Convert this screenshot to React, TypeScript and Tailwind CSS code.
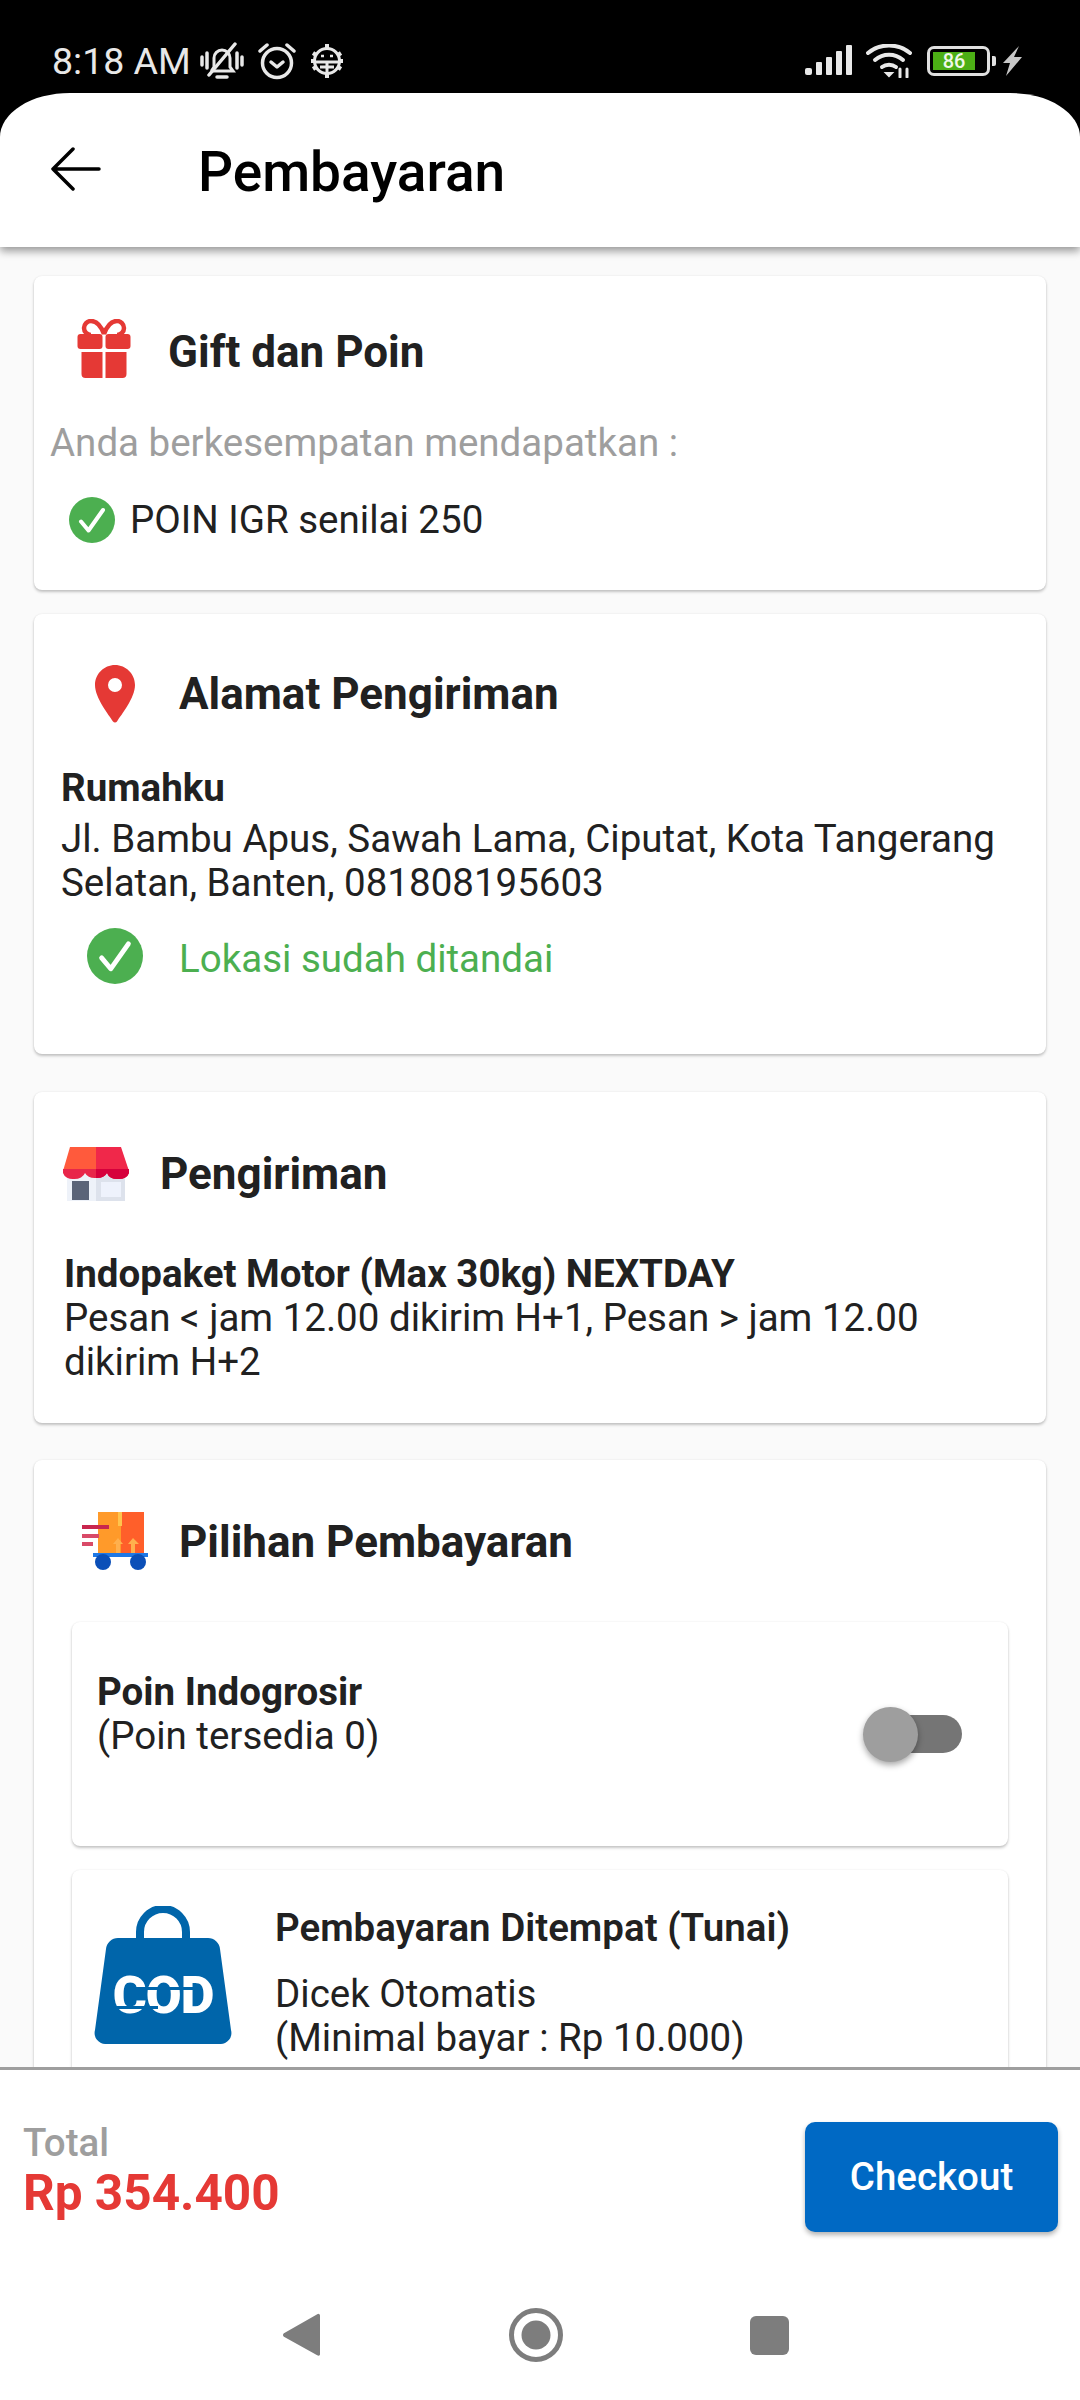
import React from "react";

const font = { fontFamily: "Roboto, sans-serif" };

function CheckCircle({ size }: { size: number }) {
  return (
    <svg width={size} height={size} viewBox="0 0 46 46" className="shrink-0">
      <circle cx="23" cy="23" r="23" fill="#4caf50" />
      <path d="M12 24.500l7.500 9L34 13" fill="none" stroke="#fff" strokeWidth="4" strokeLinecap="round" strokeLinejoin="round" />
    </svg>
  );
}

function StatusLeft() {
  return (
    <div className="flex items-center">
      <span className="text-[37.5px] leading-[44px] text-[#e8e8e8] mr-[9px]">8:18 AM</span>
      <svg width="44" height="38" viewBox="0 0 44 38" className="mr-[14px]" fill="none" stroke="#e8e8e8" strokeWidth="3.500" strokeLinecap="round">
        <path d="M2 15v8M7 11v15M37 11v15M42 15v8" />
        <path d="M12 28l2-3v-9a8 8 0 0 1 16 0v9l3 4H13z" strokeWidth="3" />
        <path d="M9 33L35 2" />
        <path d="M17 35h10" strokeWidth="3.500" />
      </svg>
      <svg width="38" height="38" viewBox="0 0 38 38" className="mr-[14px]" fill="none" stroke="#e8e8e8" strokeWidth="3.500" strokeLinecap="round" strokeLinejoin="round">
        <circle cx="19" cy="21" r="14.500" />
        <path d="M13 20l6 5 6-5" />
        <path d="M2 9l7-6M36 9l-7-6" />
      </svg>
      <svg width="34" height="36" viewBox="0 0 34 36" fill="none" stroke="#e8e8e8" strokeWidth="3">
        <circle cx="17" cy="18" r="12.500" />
        <path d="M17 1v5M17 30v5M3 10l3 2M31 10l-3 2M3 26l3-2M31 26l-3-2M1 18h4M29 18h4" strokeWidth="4" />
        <path d="M6 19h22M17 19v11M10 24h14" />
        <path d="M11 13h3M20 13h3" strokeWidth="2.500" />
      </svg>
    </div>
  );
}

function StatusRight() {
  return (
    <div className="flex items-center">
      <svg width="48" height="32" viewBox="0 0 48 32" className="mr-[13px]" fill="#e8e8e8">
        <rect x="0" y="23" width="7" height="7" rx="2" />
        <rect x="11" y="17" width="6" height="13" rx="1" />
        <rect x="21" y="12" width="6" height="18" rx="1" />
        <rect x="31" y="6" width="6" height="24" rx="1" />
        <rect x="41" y="0" width="6" height="30" rx="1" />
      </svg>
      <svg width="46" height="34" viewBox="0 0 46 34" className="mr-[15px]" fill="none" stroke="#e8e8e8" strokeWidth="4" strokeLinecap="round">
        <path d="M2 9c12-10 30-10 42 0" />
        <path d="M9 16c8-7 20-7 28 0" />
        <path d="M16 23c4-3 10-3 14 0" />
        <path d="M20 29l3 3 3-3z" fill="#e8e8e8" strokeWidth="2" />
        <path d="M34 25v8M41 25v8" strokeWidth="3" />
      </svg>
      <div className="w-[63px] h-[30px] rounded-[7px] border-[3px] border-[#e0e0e0] p-[3px] mr-[2px]">
        <div className="w-[42px] h-full bg-[#4caf15] flex items-center justify-center text-[20px] leading-none font-medium text-[#f0f8e8]">86</div>
      </div>
      <div className="w-[4px] h-[10px] bg-[#e0e0e0] rounded-r-[2px] mr-[7px]" />
      <svg width="19" height="30" viewBox="0 0 19 30" fill="#c8c8c8">
        <path d="M16 0L0 17h7L3 30 19 11h-8z" />
      </svg>
    </div>
  );
}

function GiftIcon() {
  return (
    <svg width="54" height="60" viewBox="0 0 54 60" className="shrink-0">
      <path d="M27 15c-3-8-7-13-13-13a7 7 0 0 0 0 14M27 15c3-8 7-13 13-13a7 7 0 0 1 0 14" fill="none" stroke="#e53935" strokeWidth="4.500" />
      <rect x="0.500" y="15" width="25" height="15" rx="3" fill="#e53935" />
      <rect x="28.500" y="15" width="25" height="15" rx="3" fill="#e53935" />
      <path d="M4.500 33h21v26h-17a4 4 0 0 1-4-4zM28.500 33h21v22a4 4 0 0 1-4 4h-17z" fill="#e53935" />
    </svg>
  );
}

function PinIcon() {
  return (
    <svg width="40" height="58" viewBox="0 0 40 58" className="shrink-0">
      <path fillRule="evenodd" d="M20 0C9 0 0 9 0 20c0 13 14 30 18 36.500a2.500 2.500 0 0 0 4 0C26 50 40 33 40 20 40 9 31 0 20 0zm0 13a7 7 0 1 1 0 14 7 7 0 0 1 0-14z" fill="#e53935" />
    </svg>
  );
}

function StoreIcon() {
  return (
    <svg width="66" height="56" viewBox="0 0 66 56" className="shrink-0">
      <rect x="4" y="20" width="58" height="35" fill="#eef2f9" />
      <rect x="33" y="20" width="29" height="35" fill="#dde2ec" />
      <rect x="9" y="35" width="17" height="19" fill="#5b6478" />
      <rect x="38" y="36" width="20" height="15" fill="#eef2fc" />
      <path d="M7 1h26v24H0z" fill="#ff5a3c" />
      <path d="M33 1h25l8 24H33z" fill="#f0284a" />
      <path d="M0 23h66v4a10 8 0 0 1-11 6 10 8 0 0 1-11-6 11 8 0 0 1-11 5 11 8 0 0 1-11-5 11 8 0 0 1-11 6 10 8 0 0 1-11-6z" fill="#e8264a" />
      <path d="M33 23h33v4a10 8 0 0 1-11 6 10 8 0 0 1-11-6 11 8 0 0 1-11 5z" fill="#d6003c" />
    </svg>
  );
}

function TruckIcon() {
  return (
    <svg width="66" height="60" viewBox="0 0 66 60" className="shrink-0">
      <rect x="16" y="0" width="23" height="43" fill="#ff9a2a" />
      <rect x="39" y="0" width="23" height="43" fill="#ff5f2a" />
      <rect x="36" y="0" width="4" height="14" fill="#ffc44d" />
      <path d="M36 26l5 6h-3v10h-4V32h-3zM51 26l6 6h-4v10h-4V32h-3z" fill="#ffb04d" />
      <rect x="0" y="13" width="27" height="4" fill="#c9264e" />
      <rect x="0" y="22" width="17" height="4" fill="#d94a68" />
      <rect x="0" y="30" width="11" height="4" fill="#d94a68" />
      <rect x="11" y="41" width="55" height="4" fill="#1e78e6" />
      <circle cx="21" cy="50" r="8" fill="#0b4fb8" />
      <circle cx="56" cy="50" r="8" fill="#0b4fb8" />
    </svg>
  );
}

function CodIcon() {
  return (
    <svg width="138" height="138" viewBox="0 0 138 138" className="shrink-0">
      <path d="M46 36V26a23 23 0 0 1 46 0v10" fill="none" stroke="#0065aa" strokeWidth="8" />
      <path d="M24 32h90a12 12 0 0 1 12 11l11 81a11 11 0 0 1-11 14H12a11 11 0 0 1-11-14l11-81a12 12 0 0 1 12-11z" fill="#0065aa" />
      <text x="69" y="107" textAnchor="middle" fontFamily="Roboto, sans-serif" fontWeight="900" fontSize="52" letterSpacing="-1" fill="#fff">COD</text>
      <rect x="34" y="81" width="72" height="3" fill="#0065aa" />
      <rect x="20" y="100" width="44" height="3" fill="#0065aa" />
    </svg>
  );
}

function Card({ className, children }: { className: string; children: React.ReactNode }) {
  return (
    <div className={"bg-white rounded-[8px] shadow-[0_2px_3px_rgba(0,0,0,0.22),0_0_2px_rgba(0,0,0,0.08)] " + className}>
      {children}
    </div>
  );
}

export default function App() {
  return (
    <div className="w-[1080px] h-[2400px] flex flex-col overflow-hidden bg-black text-[#212121]" style={font}>
      {/* status bar */}
      <div className="h-[93px] shrink-0 flex items-center justify-between pl-[52px] pr-[58px] pt-[28px]">
        <StatusLeft />
        <StatusRight />
      </div>

      {/* app bar */}
      <div className="relative z-10 h-[154px] shrink-0 bg-white rounded-t-[70px_44px] shadow-[0_4px_8px_rgba(0,0,0,0.4)] flex items-center pl-[51px]">
        <svg width="50" height="44" viewBox="0 0 50 44" className="shrink-0 mt-[-2px]" fill="none" stroke="#000" strokeWidth="3.500" strokeLinecap="round" strokeLinejoin="round">
          <path d="M48 22H2M22 2L2 22l20 20" />
        </svg>
        <span className="ml-[97px] text-[55px] leading-[64px] font-medium text-black mt-[4px]">Pembayaran</span>
      </div>

      {/* content */}
      <div className="flex-1 min-h-0 overflow-hidden bg-[#fafafa] pt-[29px] px-[34px] flex flex-col">
        <Card className="h-[314px] shrink-0 pt-[43px] flex flex-col">
          <div className="flex items-center pl-[43px] h-[60px]">
            <GiftIcon />
            <span className="ml-[37px] text-[44px] leading-[50px] font-bold mt-[6px]">Gift dan Poin</span>
          </div>
          <div className="pl-[16px] mt-[42px] text-[38.5px] leading-[44px] text-[#9e9e9e]">Anda berkesempatan mendapatkan :</div>
          <div className="flex items-center pl-[35px] mt-[32px]">
            <CheckCircle size={46} />
            <span className="ml-[15px] text-[38.5px] leading-[44px]">POIN IGR senilai 250</span>
          </div>
        </Card>

        <Card className="h-[440px] shrink-0 mt-[24px] pt-[50px]">
          <div className="flex items-center pl-[61px] h-[60px]">
            <PinIcon />
            <span className="ml-[44px] text-[44px] leading-[50px] font-bold">Alamat Pengiriman</span>
          </div>
          <div className="pl-[27px] pr-[30px] mt-[42px] text-[38.5px] leading-[44px]">
            <div className="font-bold">Rumahku</div>
            <div className="mt-[7px]">Jl. Bambu Apus, Sawah Lama, Ciputat, Kota Tangerang Selatan, Banten, 081808195603</div>
          </div>
          <div className="flex items-center pl-[53px] mt-[23px]">
            <CheckCircle size={56} />
            <span className="ml-[36px] text-[38.5px] leading-[44px] text-[#4caf50] mt-[6px]">Lokasi sudah ditandai</span>
          </div>
        </Card>

        <Card className="h-[331px] shrink-0 mt-[38px] pt-[54px]">
          <div className="flex items-center pl-[29px] h-[56px]">
            <StoreIcon />
            <span className="ml-[31px] text-[44px] leading-[50px] font-bold">Pengiriman</span>
          </div>
          <div className="pl-[30px] pr-[30px] mt-[50px] text-[38.5px] leading-[44px]">
            <div className="font-bold">Indopaket Motor (Max 30kg) NEXTDAY</div>
            <div>Pesan &lt; jam 12.00 dikirim H+1, Pesan &gt; jam 12.00 dikirim H+2</div>
          </div>
        </Card>

        <Card className="h-[700px] shrink-0 mt-[37px] pt-[52px] px-[38px]">
          <div className="flex items-center pl-[10px] h-[60px]">
            <TruckIcon />
            <span className="ml-[31px] text-[44px] leading-[50px] font-bold">Pilihan Pembayaran</span>
          </div>
          <Card className="h-[224px] mt-[50px] pt-[48px] pl-[25px] pr-[46px] flex justify-between items-start">
            <div className="text-[38.5px] leading-[44px]">
              <div className="font-bold">Poin Indogrosir</div>
              <div>(Poin tersedia 0)</div>
            </div>
            <div className="relative w-[82px] h-[38px] mt-[45px] rounded-full bg-[#757575]">
              <div className="absolute left-[-17px] top-[-8px] w-[55px] h-[55px] rounded-full bg-[#9e9e9e] shadow-[0_3px_6px_rgba(0,0,0,0.35)]" />
            </div>
          </Card>
          <Card className="h-[300px] mt-[24px] pt-[36px] pl-[22px] flex">
            <CodIcon />
            <div className="ml-[43px] text-[38.5px] leading-[44px]">
              <div className="font-semibold">Pembayaran Ditempat (Tunai)</div>
              <div className="mt-[22px]">Dicek Otomatis</div>
              <div>(Minimal bayar : Rp 10.000)</div>
            </div>
          </Card>
        </Card>
      </div>

      {/* footer */}
      <div className="relative z-10 h-[333px] shrink-0 bg-white border-t-[3px] border-[#9e9e9e]">
        <div className="flex items-center justify-between pl-[23px] pr-[22px] pt-[51px]">
          <div className="mb-[12px]">
            <div className="text-[38.5px] leading-[44px] font-medium text-[#9e9e9e]">Total</div>
            <div className="text-[49.5px] leading-[56px] font-bold text-[#e53935]">Rp 354.400</div>
          </div>
          <div className="w-[253px] h-[110px] rounded-[10px] bg-[#0069c4] shadow-[0_3px_5px_rgba(0,0,0,0.3)] flex items-center justify-center text-[38.5px] font-medium text-white">
            Checkout
          </div>
        </div>
        <div className="flex items-center justify-center mt-[67px] h-[70px] pr-[12px]">
          <svg width="37" height="46" viewBox="0 0 40 46" className="ml-[3px]">
            <path d="M38 0a2 2 0 0 1 2 2v42a2 2 0 0 1-3 1L1 25a2.500 2.500 0 0 1 0-4z" fill="#7d7d7d" />
          </svg>
          <svg width="54" height="54" viewBox="0 0 54 54" className="ml-[189px]">
            <circle cx="27" cy="27" r="24.500" fill="none" stroke="#7d7d7d" strokeWidth="5" />
            <circle cx="27" cy="27" r="14.500" fill="#7d7d7d" />
          </svg>
          <div className="w-[39px] h-[39px] ml-[187px] rounded-[6px] bg-[#7d7d7d]" />
        </div>
      </div>
    </div>
  );
}
